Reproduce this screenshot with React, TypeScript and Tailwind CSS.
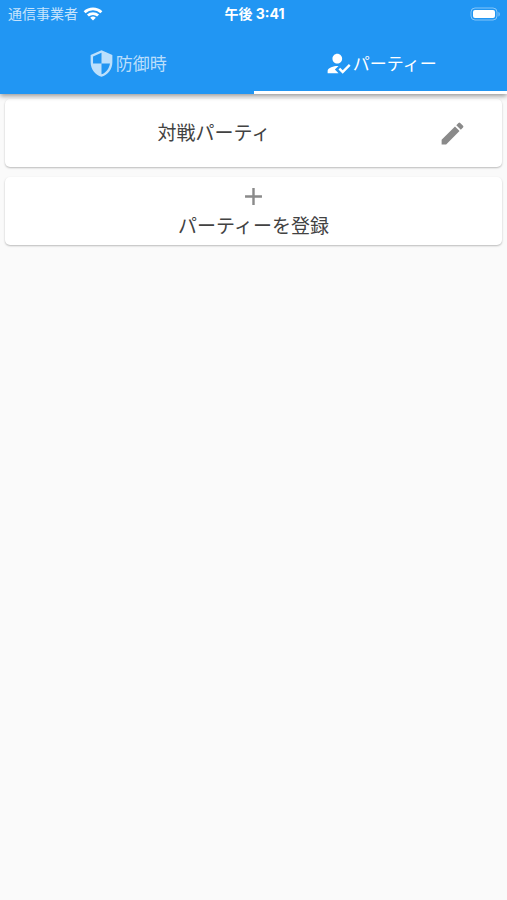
import React from "react";
import { MdAdd, MdEdit, MdHowToReg, MdSecurity } from "react-icons/md";

const tabs = [
  { label: "防御時", icon: MdSecurity, active: false },
  { label: "パーティー", icon: MdHowToReg, active: true },
];

const parties = ["対戦パーティ"];

const StatusBar = () => {
  return (
    <div className="grid grid-cols-3 items-center h-6 pt-1 pl-2 pr-1.5 text-[14px] leading-5 text-white">
      <div className="flex items-center gap-[5px] whitespace-nowrap text-white/75">
        <span>通信事業者</span>
        <svg width="20" height="14" viewBox="0 0 20 14" fill="none" stroke="white" strokeWidth="2.8">
          <path d="M1.6 5.2a12.2 12.2 0 0 1 16.8 0" />
          <path d="M4.9 8.6a7.4 7.4 0 0 1 10.2 0" />
          <path d="M10 13.6 7.2 10.8a4 4 0 0 1 5.6 0z" fill="white" stroke="none" />
        </svg>
      </div>
      <div className="text-center font-['Inter','Noto_Sans_CJK_JP',sans-serif] font-bold whitespace-nowrap">
        午後 3:41
      </div>
      <div className="flex justify-end">
        <svg width="31" height="15" viewBox="0 0 31 15">
          <rect x="1" y="1" width="26" height="12" rx="4" fill="none" stroke="white" strokeOpacity="0.45" />
          <rect x="3" y="3" width="22" height="8" rx="2" fill="white" />
          <path d="M28.5 5v4.5c1.6-.6 1.6-3.9 0-4.5z" fill="white" fillOpacity="0.5" />
        </svg>
      </div>
    </div>
  );
};

const App = () => {
  return (
    <div className="min-h-screen bg-[#fafafa] font-['Liberation_Sans','Noto_Sans_CJK_JP',sans-serif] text-[#424242]">
      <header className="relative bg-[#2196f3] shadow-[0_2px_5px_rgba(0,0,0,0.4)]">
        <StatusBar />
        <nav className="grid grid-cols-2 h-[70px]">
          {tabs.map(({ label, icon: Icon, active }) => (
            <button
              key={label}
              type="button"
              className={
                active
                  ? "flex items-center justify-center pt-3 text-[17px] text-white border-b-3 border-white"
                  : "flex items-center justify-center pt-3 text-[17px] text-white/70 border-b-3 border-transparent"
              }
            >
              <Icon size={29} />
              <span className="pt-0.5">{label}</span>
            </button>
          ))}
        </nav>
      </header>

      <main className="flex flex-col gap-2.5 p-[5px]">
        {parties.map((party) => (
          <div
            key={party}
            className="flex items-center gap-5 h-[68px] px-5 bg-white rounded-[5px] shadow-[0_1px_2px_rgba(0,0,0,0.26)]"
          >
            <p className="flex-1 pt-0.5 text-center text-[19px]">{party}</p>
            <button type="button" aria-label="編集" className="flex items-center justify-center size-[59px] text-[#8a8a8a]">
              <MdEdit size={29} />
            </button>
          </div>
        ))}
        <button
          type="button"
          className="flex flex-col items-center justify-center h-[68px] bg-white rounded-[5px] shadow-[0_1px_2px_rgba(0,0,0,0.26)]"
        >
          <MdAdd size={29} className="text-[#8a8a8a]" />
          <span className="pt-0.5 text-[19px] leading-7">パーティーを登録</span>
        </button>
      </main>
    </div>
  );
};

export default App;
